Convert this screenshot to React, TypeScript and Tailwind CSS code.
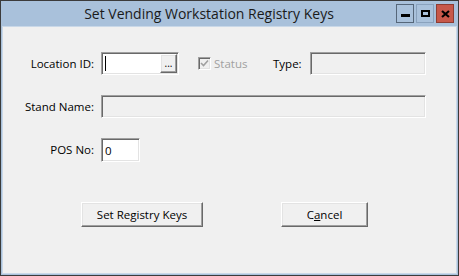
import { useState } from 'react';

const UI = { fontFamily: '"Open Sans", "Noto Sans", sans-serif' };

// sunken 3D edge used by text boxes and the checkbox
const sunken =
  'border border-t-[#a0a0a0] border-l-[#a0a0a0] border-b-[#ffffff] border-r-[#ffffff] shadow-[inset_1px_1px_0_#696969,inset_-1px_-1px_0_#e3e3e3]';

// raised 3D edge used by push buttons
const raised =
  'border border-t-[#ffffff] border-l-[#ffffff] border-b-[#696969] border-r-[#696969] shadow-[inset_-1px_-1px_0_#a0a0a0,inset_1px_1px_0_#e3e3e3] bg-[#f0f0f0]';

function Label({ children, width }: { children: React.ReactNode; width: string }) {
  return (
    <div className={`${width} shrink-0 text-right text-[11.5px] leading-none text-[#000]`}>{children}</div>
  );
}

export default function App() {
  const [pos, setPos] = useState('0');

  return (
    <div
      className="w-[459px] h-[276px] flex flex-col bg-[#a9c1db] border border-[#3b3b3b] select-none"
      style={UI}
    >
      {/* title bar */}
      <div className="h-[25px] shrink-0 flex items-center relative">
        <div className="flex-1 text-center text-[14px] leading-none text-[#1a1a1a] pr-[41px]">
          Set Vending Workstation Registry Keys
        </div>
        <div className="absolute right-[4px] top-[3px] flex gap-[2px]">
          <button className="w-[18px] h-[19px] border border-[#56677a] bg-[#a9c1db] flex items-center justify-center">
            <span className="block w-[9px] h-[3px] bg-black mt-[4px]" />
          </button>
          <button className="w-[18px] h-[19px] border border-[#8aa2bd] bg-[#a9c1db] flex items-center justify-center">
            <span className="block w-[9px] h-[7px] border-2 border-black" />
          </button>
          <button className="w-[18px] h-[19px] border border-[#8e3c32] bg-[#c7584a] flex items-center justify-center">
            <svg width="9" height="8" viewBox="0 0 9 8">
              <path d="M1 1 L8 7 M8 1 L1 7" stroke="#000" strokeWidth="2.2" />
            </svg>
          </button>
        </div>
      </div>

      {/* client area */}
      <div className="flex-1 mx-[1px] mb-[1px] border border-[#c9d8e8] bg-[#f0f0f0] flex flex-col">
        {/* Location / Status / Type */}
        <div className="mt-[25px] flex items-center h-[23px]">
          <Label width="w-[91px]">Location ID:</Label>
          <div className={`ml-[7px] w-[78px] h-[23px] bg-white flex items-stretch ${sunken}`}>
            <div className="flex-1 flex items-center pl-[3px]">
              <span className="block w-[1px] h-[15px] bg-black" />
            </div>
            <button className={`w-[17px] my-[1px] mr-[1px] flex items-end justify-center pb-[4px] text-[10px] leading-none ${raised}`}>
              ...
            </button>
          </div>
          <div className="ml-[19px] w-[75px] shrink-0 flex items-center gap-[3px]">
            <span className={`w-[13px] h-[13px] bg-[#f0f0f0] flex items-center justify-center ${sunken}`}>
              <svg width="9" height="9" viewBox="0 0 9 9">
                <path d="M1 4 L3.5 6.5 L8 1.5" stroke="#a0a0a0" strokeWidth="1.6" fill="none" />
              </svg>
            </span>
            <span className="text-[11.5px] leading-none text-[#a0a0a0]">Status</span>
          </div>
          <div className="w-[28px] shrink-0 text-[11.5px] leading-none text-black">Type:</div>
          <div className={`ml-[9px] w-[116px] h-[23px] bg-[#f0f0f0] ${sunken}`} />
        </div>

        {/* Stand Name */}
        <div className="mt-[20px] flex items-center h-[23px]">
          <Label width="w-[91px]">Stand Name:</Label>
          <div className={`ml-[7px] w-[325px] h-[23px] bg-[#f0f0f0] ${sunken}`} />
        </div>

        {/* POS No */}
        <div className="mt-[20px] flex items-center h-[24px]">
          <Label width="w-[91px]">POS No:</Label>
          <input
            value={pos}
            onChange={(e) => setPos(e.target.value)}
            className={`ml-[7px] w-[39px] h-[24px] bg-white px-[3px] text-[11.5px] text-black outline-none ${sunken}`}
            style={UI}
          />
        </div>

        {/* buttons */}
        <div className="mt-[40px] flex items-center">
          <button className={`ml-[78px] w-[122px] h-[25px] text-[11.5px] leading-none text-black ${raised}`}>
            Set Registry Keys
          </button>
          <button className={`ml-[78px] w-[87px] h-[25px] text-[11.5px] leading-none text-black ${raised}`}>
            C<span className="underline">a</span>ncel
          </button>
        </div>
      </div>
    </div>
  );
}
